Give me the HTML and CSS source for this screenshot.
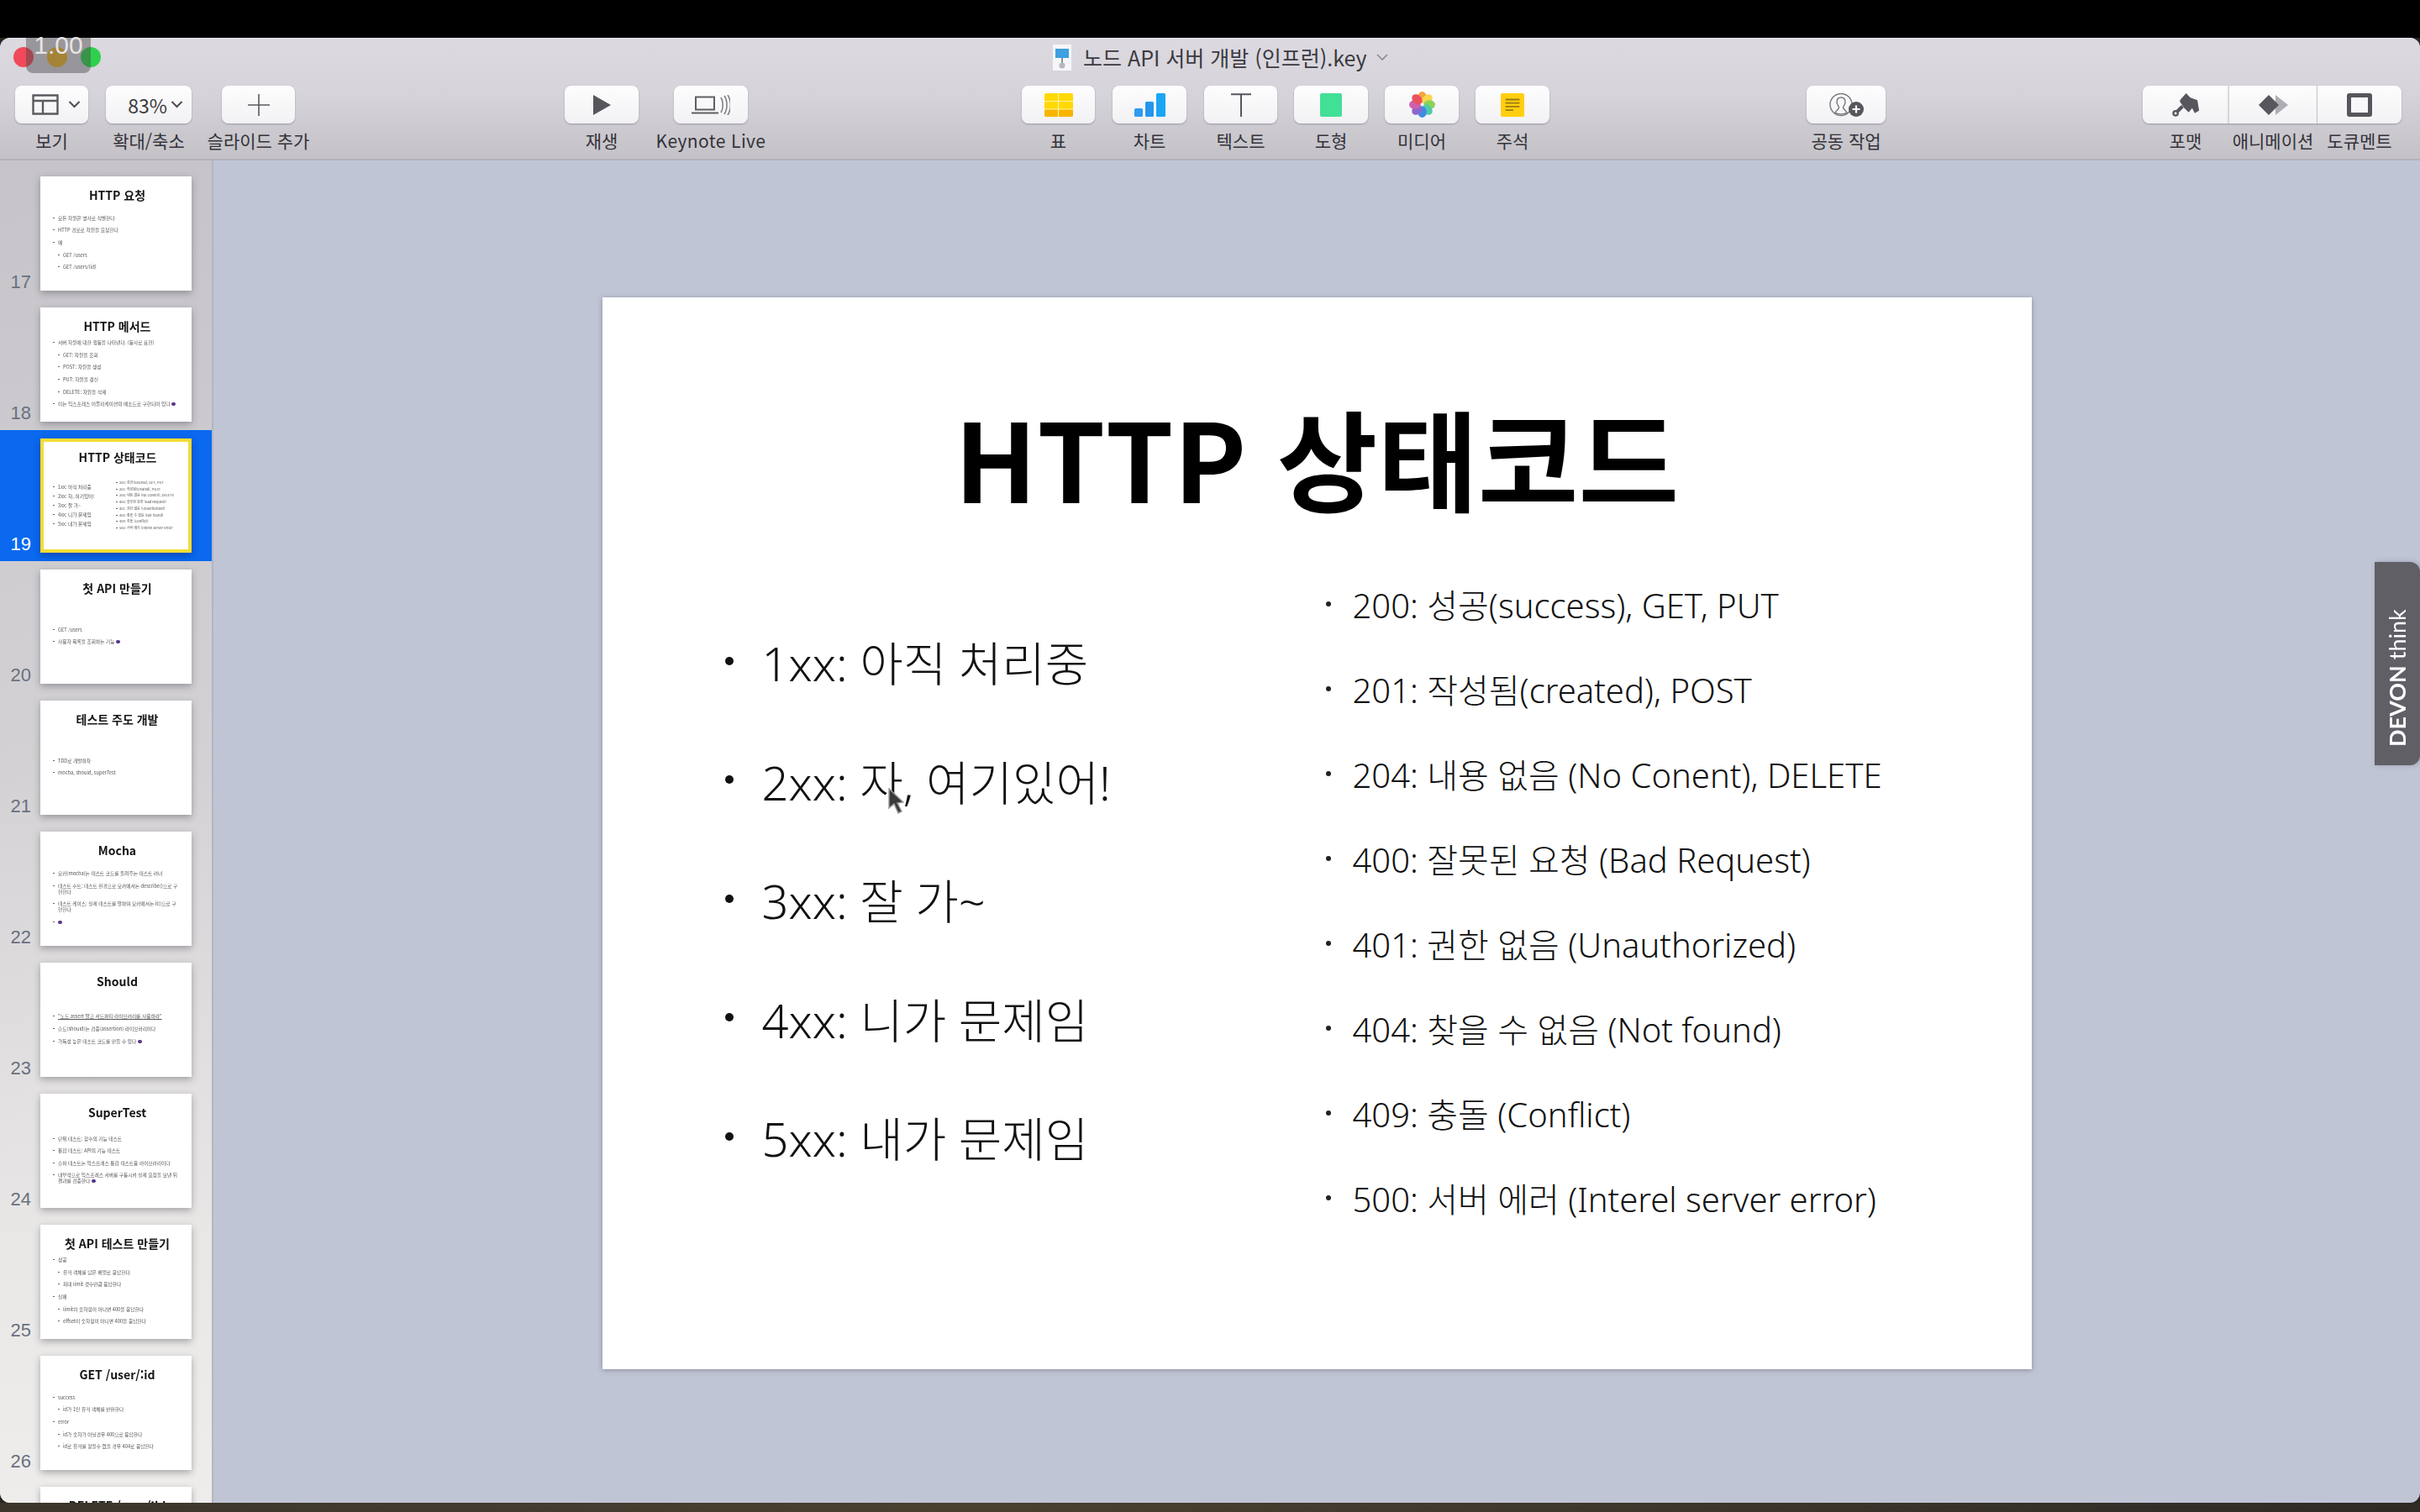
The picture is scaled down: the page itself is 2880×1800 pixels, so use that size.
FILE: index.html
```html
<!DOCTYPE html>
<html lang="ko">
<head>
    <meta charset="UTF-8">
    <title>노드 API 서버 개발 (인프런).key</title>
    <link rel="stylesheet" href="styles.css">
</head>
<body>

<div class="top-bar"></div>

<div class="window">
    <header class="toolbar">
        <div class="title-row">
            <div class="lights">
                <span class="light red"></span>
                <span class="light yellow"></span>
                <span class="light green"></span>
            </div>
            <div class="doc-title">
                <svg class="doc-icon" viewBox="0 0 22 31">
                    <rect width="22" height="31" fill="#f6f6f8"/>
                    <rect x="3" y="5" width="16" height="11" fill="#3f9fe0"/>
                    <rect x="10" y="16" width="2" height="8" fill="#8c8f98"/>
                    <circle cx="11" cy="25" r="3.5" fill="#b5b8c0"/>
                </svg>
                <span>노드 API 서버 개발 (인프런).key</span>
                <svg class="doc-caret" viewBox="0 0 14 8"><path d="M1 1l6 6 6-6" fill="none" stroke="#8d8b92" stroke-width="1.6"/></svg>
            </div>
        </div>

        <div class="tools">
            <div class="tool w-87">
                <div class="btn view-btn">
                    <svg class="ico-view" viewBox="0 0 32 25"><path d="M1.5 1.500h29v22h-29zM1.5 8h29M13 8v15.500" fill="none" stroke="#5b5a60" stroke-width="2.400"/></svg>
                    <svg class="chev" viewBox="0 0 14 9"><path d="M1 1l6 6 6-6" fill="none" stroke="#4c4b50" stroke-width="2"/></svg>
                </div>
                <span>보기</span>
            </div>
            <div class="tool w-102 ml-21">
                <div class="btn zoom-btn">
                    <b class="zoom-val">83%</b>
                    <svg class="chev" viewBox="0 0 14 9"><path d="M1 1l6 6 6-6" fill="none" stroke="#4c4b50" stroke-width="2"/></svg>
                </div>
                <span>확대/축소</span>
            </div>
            <div class="tool w-87 ml-36">
                <div class="btn">
                    <svg class="ico-24" viewBox="0 0 26 26"><path d="M13 0v26M0 13h26" stroke="#5b5a60" stroke-width="1.600"/></svg>
                </div>
                <span>슬라이드 추가</span>
            </div>

            <div class="tool w-88 ml-321">
                <div class="btn">
                    <svg class="ico-play" viewBox="0 0 21 24"><path d="M0 0l21 12L0 24z" fill="#57565c"/></svg>
                </div>
                <span>재생</span>
            </div>
            <div class="tool w-88 ml-42">
                <div class="btn">
                    <svg class="ico-live" viewBox="0 0 46 24"><path d="M5 2.500h22v15H5zM0 21.500h32" fill="none" stroke="#5f5e64" stroke-width="2"/><path d="M35 3c3 5 3 13 0 18M39 1c4 6 4 16 0 22M43 0c4.500 7 4.500 17 0 24" fill="none" stroke="#7d7c82" stroke-width="1.500"/></svg>
                </div>
                <span class="wide">Keynote Live</span>
            </div>

            <div class="tool w-87 ml-326">
                <div class="btn">
                    <svg class="ico-28" viewBox="0 0 34 28">
                        <rect width="34" height="28" rx="2" fill="#ffd900"/>
                        <rect y="19" width="34" height="9" rx="2" fill="#f7b500"/>
                        <path d="M16.500 0v28M0 9.500h34M0 19h34" stroke="#fff3a8" stroke-width="1.200"/>
                    </svg>
                </div>
                <span>표</span>
            </div>
            <div class="tool w-88 ml-21">
                <div class="btn">
                    <svg class="ico-28" viewBox="0 0 37 28">
                        <rect y="18" width="10" height="10" rx="1.500" fill="#2e9bf0"/>
                        <rect x="13" y="10" width="10" height="18" rx="1.500" fill="#2496ee"/>
                        <rect x="26" width="11" height="28" rx="1.500" fill="#1aa6f5"/>
                    </svg>
                </div>
                <span>차트</span>
            </div>
            <div class="tool w-87 ml-21">
                <div class="btn">
                    <svg class="ico-28" viewBox="0 0 24 28"><path d="M0 1.200h24M12 1.200V28" fill="none" stroke="#57565c" stroke-width="2"/></svg>
                </div>
                <span>텍스트</span>
            </div>
            <div class="tool w-88 ml-20">
                <div class="btn">
                    <svg class="ico-28" viewBox="0 0 26 28"><rect width="26" height="28" rx="2" fill="#42df96"/></svg>
                </div>
                <span>도형</span>
            </div>
            <div class="tool w-88 ml-20">
                <div class="btn">
                    <svg class="ico-flower" viewBox="-16 -16 32 32">
                        <g opacity="0.9">
                            <ellipse cy="-9" rx="5.500" ry="7" fill="#f59b2e"/>
                            <ellipse cy="-9" rx="5.500" ry="7" fill="#f7d33a" transform="rotate(45)"/>
                            <ellipse cy="-9" rx="5.500" ry="7" fill="#7fce4a" transform="rotate(90)"/>
                            <ellipse cy="-9" rx="5.500" ry="7" fill="#3fc7a0" transform="rotate(135)"/>
                            <ellipse cy="-9" rx="5.500" ry="7" fill="#2f7fe0" transform="rotate(180)"/>
                            <ellipse cy="-9" rx="5.500" ry="7" fill="#8058c8" transform="rotate(225)"/>
                            <ellipse cy="-9" rx="5.500" ry="7" fill="#c850a8" transform="rotate(270)"/>
                            <ellipse cy="-9" rx="5.500" ry="7" fill="#e8404c" transform="rotate(315)"/>
                        </g>
                    </svg>
                </div>
                <span>미디어</span>
            </div>
            <div class="tool w-88 ml-20">
                <div class="btn">
                    <svg class="ico-28" viewBox="0 0 30 30">
                        <rect width="30" height="30" rx="2" fill="#ffcf0f"/>
                        <path d="M6 8h18M6 12.500h18M6 17h18M6 21.500h10" stroke="#9a7a10" stroke-width="2"/>
                    </svg>
                </div>
                <span>주석</span>
            </div>

            <div class="tool w-94 ml-306">
                <div class="btn">
                    <svg class="ico-collab" viewBox="0 0 41 28">
                        <circle cx="14" cy="13.500" r="13" fill="none" stroke="#77767c" stroke-width="1.400"/>
                        <path d="M14 5c-3.500 0-5 2.500-5 5.500 0 2.500 1.500 4.500 2.500 6 .4 2.500-3.500 4-4.500 6.500 3 2.500 11 2.500 14 0-1-2.500-4.900-4-4.500-6.500 1-1.500 2.500-3.500 2.500-6C19 7.500 17.500 5 14 5z" fill="none" stroke="#77767c" stroke-width="1.400"/>
                        <circle cx="32" cy="19" r="9" fill="#57565c"/>
                        <path d="M32 14.500v9M27.500 19h9" stroke="#fff" stroke-width="2.200"/>
                    </svg>
                </div>
                <span>공동 작업</span>
            </div>

            <div class="seg ml-306">
                <div class="tool w-102">
                    <div class="btn first">
                        <svg class="ico-28" viewBox="0 0 31 27">
                            <path d="M9 8l7-8 5 5 8 3 2 12-5 3-3-6-4 5-5-5-5-7z" fill="#57565c"/>
                            <path d="M12 15l-7 7" stroke="#57565c" stroke-width="4"/>
                            <circle cx="4" cy="23" r="2.600" fill="none" stroke="#57565c" stroke-width="2.200"/>
                        </svg>
                    </div>
                    <span>포맷</span>
                </div>
                <div class="tool w-106">
                    <div class="btn mid">
                        <svg class="ico-diamond" viewBox="0 0 35 24">
                            <path d="M20 0l15 12-15 12z" fill="#aeadb3"/>
                            <path d="M12 0l12 12-12 12L0 12z" fill="#57565c"/>
                        </svg>
                    </div>
                    <span>애니메이션</span>
                </div>
                <div class="tool w-100">
                    <div class="btn last">
                        <svg class="ico-28" viewBox="0 0 30 28"><rect width="30" height="28" rx="3" fill="#57565c"/><rect x="5" y="5" width="20" height="18" fill="#f8f7f9"/></svg>
                    </div>
                    <span>도큐멘트</span>
                </div>
            </div>
        </div>
    </header>

    <div class="main">
        <aside class="sidebar">
            <div class="row">
                <span class="num">17</span>
                <div class="thumb">
                    <h4>HTTP 요청</h4>
                    <ul>
                        <li>모든 자원은 명사로 식별한다</li>
                        <li>HTTP 경로로 자원을 요청한다</li>
                        <li>예</li>
                        <li class="sub">GET /users</li>
                        <li class="sub">GET /users/{id}</li>
                    </ul>
                </div>
            </div>
            <div class="row">
                <span class="num">18</span>
                <div class="thumb">
                    <h4>HTTP 메서드</h4>
                    <ul>
                        <li>서버 자원에 대한 행동을 나타낸다. (동사로 표현)</li>
                        <li class="sub">GET: 자원을 조회</li>
                        <li class="sub">POST: 자원을 생성</li>
                        <li class="sub">PUT: 자원을 갱신</li>
                        <li class="sub">DELETE: 자원을 삭제</li>
                        <li>이는 익스프레스 어플리케이션의 메소드로 구현되어 있다 <i class="blob"></i></li>
                    </ul>
                </div>
            </div>
            <div class="row selected">
                <span class="num">19</span>
                <div class="thumb current">
                    <h4>HTTP 상태코드</h4>
                    <div class="thumb-cols">
                        <ul>
                            <li>1xx: 아직 처리중</li>
                            <li>2xx: 자, 여기있어!</li>
                            <li>3xx: 잘 가~</li>
                            <li>4xx: 니가 문제임</li>
                            <li>5xx: 내가 문제임</li>
                        </ul>
                        <ul class="tiny">
                            <li>200: 성공(success), GET, PUT</li>
                            <li>201: 작성됨(created), POST</li>
                            <li>204: 내용 없음 (No Conent), DELETE</li>
                            <li>400: 잘못된 요청 (Bad Request)</li>
                            <li>401: 권한 없음 (Unauthorized)</li>
                            <li>404: 찾을 수 없음 (Not found)</li>
                            <li>409: 충돌 (Conflict)</li>
                            <li>500: 서버 에러 (Interel server error)</li>
                        </ul>
                    </div>
                </div>
            </div>
            <div class="row">
                <span class="num">20</span>
                <div class="thumb">
                    <h4>첫 API 만들기</h4>
                    <ul>
                        <li>GET /users</li>
                        <li>사용자 목록을 조회하는 기능 <i class="blob"></i></li>
                    </ul>
                </div>
            </div>
            <div class="row">
                <span class="num">21</span>
                <div class="thumb">
                    <h4>테스트 주도 개발</h4>
                    <ul>
                        <li>TDD로 개발하자</li>
                        <li>mocha, should, superTest</li>
                    </ul>
                </div>
            </div>
            <div class="row">
                <span class="num">22</span>
                <div class="thumb">
                    <h4>Mocha</h4>
                    <ul>
                        <li>모카(mocha)는 테스트 코드를 돌려주는 테스트 러너</li>
                        <li>테스트 수트: 테스트 환경으로 모카에서는 describe()으로 구현한다</li>
                        <li>테스트 케이스: 실제 테스트를 말하며 모카에서는 it()으로 구현한다</li>
                        <li><i class="blob"></i></li>
                    </ul>
                </div>
            </div>
            <div class="row">
                <span class="num">23</span>
                <div class="thumb">
                    <h4>Should</h4>
                    <ul>
                        <li><u>"노드 assert 말고 서드파티 라이브러리를 사용하라"</u></li>
                        <li>슈드(should)는 검증(assertion) 라이브러리이다</li>
                        <li>가독성 높은 테스트 코드를 만들 수 있다 <i class="blob"></i></li>
                    </ul>
                </div>
            </div>
            <div class="row">
                <span class="num">24</span>
                <div class="thumb">
                    <h4>SuperTest</h4>
                    <ul>
                        <li>단위 테스트: 함수의 기능 테스트</li>
                        <li>통합 테스트: API의 기능 테스트</li>
                        <li>슈퍼 테스트는 익스프레스 통합 테스트용 라이브러리이다</li>
                        <li>내부적으로 익스프레스 서버를 구동시켜 실제 요청을 보낸 뒤 결과를 검증한다 <i class="blob"></i></li>
                    </ul>
                </div>
            </div>
            <div class="row">
                <span class="num">25</span>
                <div class="thumb">
                    <h4>첫 API 테스트 만들기</h4>
                    <ul>
                        <li>성공</li>
                        <li class="sub">유저 객체를 담은 배열로 응답한다</li>
                        <li class="sub">최대 limit 갯수만큼 응답한다</li>
                        <li>실패</li>
                        <li class="sub">limit이 숫자형이 아니면 400을 응답한다</li>
                        <li class="sub">offset이 숫자형이 아니면 400을 응답한다</li>
                    </ul>
                </div>
            </div>
            <div class="row">
                <span class="num">26</span>
                <div class="thumb">
                    <h4>GET /user/:id</h4>
                    <ul>
                        <li>success</li>
                        <li class="sub">id가 1인 유저 객체를 반환한다</li>
                        <li>error</li>
                        <li class="sub">id가 숫자가 아닐경우 400으로 응답한다</li>
                        <li class="sub">id로 유저를 찾을수 없을 경우 404로 응답한다</li>
                    </ul>
                </div>
            </div>
            <div class="row">
                <span class="num"></span>
                <div class="thumb">
                    <h4>DELETE /user/:id</h4>
                </div>
            </div>
        </aside>

        <main class="canvas">
            <section class="slide">
                <h1>HTTP 상태코드</h1>
                <div class="slide-body">
                    <ul class="big-list">
                        <li>1xx: 아직 처리중</li>
                        <li>2xx: 자, 여기있어!</li>
                        <li>3xx: 잘 가~</li>
                        <li>4xx: 니가 문제임</li>
                        <li>5xx: 내가 문제임</li>
                    </ul>
                    <ul class="code-list">
                        <li>200: 성공(success), GET, PUT</li>
                        <li>201: 작성됨(created), POST</li>
                        <li>204: 내용 없음 (No Conent), DELETE</li>
                        <li>400: 잘못된 요청 (Bad Request)</li>
                        <li>401: 권한 없음 (Unauthorized)</li>
                        <li>404: 찾을 수 없음 (Not found)</li>
                        <li>409: 충돌 (Conflict)</li>
                        <li>500: 서버 에러 (Interel server error)</li>
                    </ul>
                </div>
            </section>
        </main>
    </div>
</div>

<div class="bottom-strip"></div>

<!-- things lying over the window -->
<div class="speed">1.00</div>
<div class="devon"><b>DEVON</b> think</div>
<svg class="cursor" viewBox="0 0 20 31">
    <path d="M2 1v23l6-5 5 11 4-2-5-10 7-1z" fill="#3a3a3c" stroke="#9b9b9b" stroke-width="1.500"/>
</svg>

</body>
</html>
```

FILE: styles.css
```css
* {
    box-sizing: border-box;
}
html, body {
    margin: 0;
    height: 100%;
    overflow: hidden;
}
body {
    display: flex;
    flex-direction: column;
    background: #2a2620;
    font-family: "Noto Sans CJK KR", "Noto Sans", sans-serif;
    color: #333;
}
ul {
    list-style: none;
    margin: 0;
    padding: 0;
}

.top-bar {
    height: 45px;
    background: #000;
    flex: none;
}
.bottom-strip {
    height: 11px;
    flex: none;
    background: linear-gradient(90deg, #3b352c, #4a4030 40%, #2e2b26);
}

/* window */
.window {
    flex: 1;
    min-height: 0;
    display: flex;
    flex-direction: column;
    border-radius: 12px;
    overflow: hidden;
    background: #c0c5d5;
}
.toolbar {
    height: 146px;
    flex: none;
    position: relative;
    background: linear-gradient(#dcd9e0, #d6d3da 45%, #c4c2c7);
    border-top: 1px solid #e6e4e9;
    border-bottom: 2px solid #b3b2b8;
}
.title-row {
    height: 44px;
    margin-bottom: 12px;
    display: flex;
    align-items: center;
    padding-left: 16px;
}
.lights {
    display: flex;
    gap: 16px;
}
.light {
    width: 24px;
    height: 24px;
    border-radius: 50%;
}
.red { background: #f1495a; }
.yellow { background: #f0b429; }
.green { background: #2fd14c; }

.doc-title {
    margin-left: 1133px;
    display: flex;
    align-items: center;
    font-size: 25px;
    line-height: 32px;
    color: #3b3a40;
}
.doc-icon {
    width: 22px;
    height: 31px;
    margin-right: 14px;
}
.doc-caret {
    width: 14px;
    height: 8px;
    margin-left: 11px;
}

.tools {
    display: flex;
    padding-left: 18px;
}
.tool {
    flex: none;
    display: flex;
    flex-direction: column;
    align-items: center;
    font-size: 21px;
    line-height: 30px;
    color: #34333a;
    white-space: nowrap;
}
.tool span {
    margin-top: 5px;
}
.tool .wide {
    letter-spacing: 0.4px;
}
.btn {
    width: 100%;
    height: 45px;
    display: flex;
    align-items: center;
    justify-content: center;
    gap: 9px;
    border-radius: 8px;
    background: linear-gradient(#fefdfe, #f2f1f3);
    box-shadow: 0 1px 2px rgba(60, 58, 66, 0.35);
}
.view-btn {
    gap: 11px;
}
.zoom-btn {
    gap: 4px;
    padding-left: 16px;
}
.seg {
    display: flex;
}
.btn.first { border-radius: 8px 0 0 8px; }
.btn.mid { border-radius: 0; border-left: 1px solid #d0cfd4; border-right: 1px solid #d0cfd4; }
.btn.last { border-radius: 0 8px 8px 0; }

.w-87 { width: 87px; }
.w-88 { width: 88px; }
.w-94 { width: 94px; }
.w-100 { width: 100px; }
.w-102 { width: 102px; }
.w-106 { width: 106px; }
.ml-20 { margin-left: 20px; }
.ml-21 { margin-left: 21px; }
.ml-36 { margin-left: 36px; }
.ml-42 { margin-left: 42px; }
.ml-306 { margin-left: 306px; }
.ml-321 { margin-left: 321px; }
.ml-326 { margin-left: 326px; }

.zoom-val {
    font-weight: 400;
    font-size: 23px;
    color: #3a393f;
}
.chev { width: 15px; height: 9px; }
.ico-view { width: 32px; height: 25px; margin-left: 10px; }
.ico-24 { width: 26px; height: 26px; }
.ico-play { width: 21px; height: 24px; }
.ico-live { width: 46px; height: 24px; }
.ico-28 { height: 28px; width: auto; }
.ico-flower { width: 31px; height: 31px; }
.ico-collab { width: 41px; height: 28px; }
.ico-diamond { width: 35px; height: 24px; }

/* body of the window */
.main {
    flex: 1;
    min-height: 0;
    display: flex;
}

.sidebar {
    width: 254px;
    flex: none;
    overflow: hidden;
    padding-top: 9px;
    background: linear-gradient(#c6c4c9, #d3d1d4 45%, #e9e7e6 80%, #eeedeb);
    border-right: 2px solid #b3b5c2;
}
.row {
    height: 156px;
    padding: 10px 0;
    display: flex;
    align-items: flex-end;
}
.row.selected {
    background: #0a69ef;
}
.row.selected .num {
    color: #fff;
}
.num {
    width: 37px;
    margin-right: 11px;
    text-align: right;
    font-family: "Liberation Sans", sans-serif;
    font-size: 22px;
    line-height: 20px;
    color: #69717f;
}
.thumb {
    width: 180px;
    height: 136px;
    flex: none;
    display: flex;
    flex-direction: column;
    padding: 14px 14px 14px 15px;
    background: #fff;
    box-shadow: 0 3px 8px rgba(40, 40, 50, 0.35);
    font-size: 5.700px;
    line-height: 7px;
    color: #555;
    filter: blur(0.3px);
}
.thumb h4 {
    margin: 0 -9px 0 -7px;
    height: 21px;
    text-align: center;
    font-size: 14px;
    line-height: 16px;
    font-weight: 700;
    color: #151515;
    white-space: nowrap;
}
.thumb > ul,
.thumb-cols {
    flex: 1;
    display: flex;
    flex-direction: column;
    justify-content: center;
}
.thumb li {
    position: relative;
    padding-left: 6px;
    margin: 3.800px 0;
}
.thumb li::before {
    content: "";
    position: absolute;
    left: 0;
    top: 3px;
    width: 2px;
    height: 1px;
    background: #666;
}
.thumb li.sub {
    margin-left: 6px;
}
.blob {
    display: inline-block;
    width: 5px;
    height: 4px;
    border-radius: 2px;
    background: #55368a;
}
.thumb.current {
    padding: 10px 4px 8px 11px;
    border: 4px solid #f6dc35;
    box-shadow: 0 3px 8px rgba(0, 20, 80, 0.4);
}
.thumb.current h4 {
    margin: 0 -4px 0 -7px;
}
.thumb-cols {
    flex-direction: row;
    align-items: center;
    justify-content: flex-start;
}
.thumb-cols ul {
    width: 75px;
    flex: none;
}
.thumb-cols .tiny {
    width: 72px;
    font-size: 4px;
    line-height: 5px;
    white-space: nowrap;
}
.thumb-cols .tiny li {
    padding-left: 4px;
    margin: 2.750px 0;
}
.thumb-cols .tiny li::before {
    top: 2px;
}

/* slide canvas */
.canvas {
    flex: 1;
    min-width: 0;
    display: flex;
    align-items: center;
    justify-content: center;
    padding-top: 3px;
}
.slide {
    width: 1701px;
    height: 1276px;
    flex: none;
    background: #fff;
    box-shadow: 0 1px 6px rgba(70, 72, 90, 0.45);
    color: #111;
}
.slide h1 {
    margin: 0;
    height: 315px;
    padding-top: 94px;
    font-size: 130px;
    line-height: 188px;
    font-weight: 700;
    text-align: center;
    color: #000;
}
.slide-body {
    height: 808px;
    display: grid;
    grid-template-columns: 861px 1fr;
    align-items: center;
    font-family: "Noto Sans", "Noto Sans CJK KR", sans-serif;
}
.big-list {
    padding-left: 146px;
    margin-bottom: 6px;
}
.big-list li {
    height: 141.500px;
    display: flex;
    align-items: center;
    font-size: 56px;
    font-weight: 300;
}
.big-list li::before {
    content: "";
    width: 10px;
    height: 10px;
    margin-right: 34px;
    border-radius: 50%;
    background: #111;
}
.code-list li {
    height: 101px;
    display: flex;
    align-items: center;
    font-size: 40px;
    font-weight: 300;
}
.code-list li::before {
    content: "";
    width: 6px;
    height: 6px;
    margin-right: 26px;
    border-radius: 50%;
    background: #222;
}

/* overlays */
.speed {
    position: absolute;
    left: 31px;
    top: 45px;
    width: 77px;
    height: 42px;
    border-radius: 0 0 8px 8px;
    background: rgba(70, 70, 72, 0.45);
    color: #e6e4e6;
    font-family: "Liberation Sans", sans-serif;
    font-size: 30px;
    line-height: 18px;
    text-align: center;
}
.devon {
    position: absolute;
    right: 0;
    top: 669px;
    width: 54px;
    height: 242px;
    padding-top: 22px;
    border-radius: 12px 0 0 12px;
    background: #5f5f65;
    box-shadow: -2px 0 6px rgba(70, 72, 90, 0.3);
    color: #fff;
    font-family: Lato, sans-serif;
    font-size: 27px;
    line-height: 54px;
    writing-mode: vertical-rl;
    rotate: 180deg;
}
.cursor {
    position: absolute;
    left: 1056px;
    top: 938px;
    width: 20px;
    height: 31px;
}
```
